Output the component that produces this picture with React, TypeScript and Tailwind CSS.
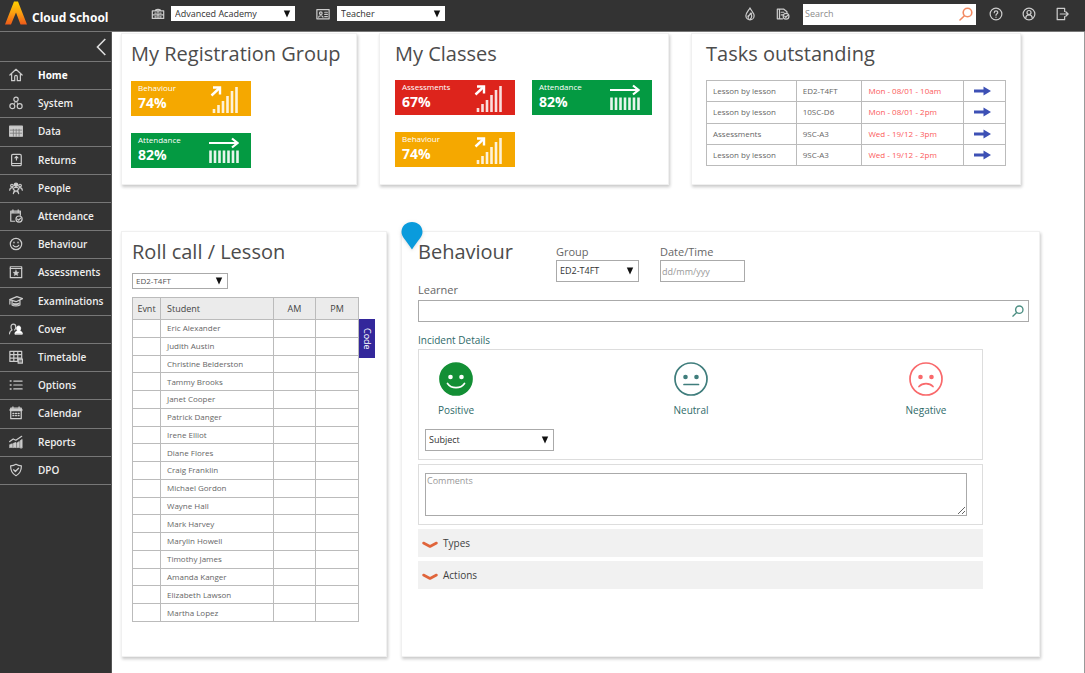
import type { ReactNode } from "react";

function Icon({ children, className = "size-3.5", view = "0 0 16 16" }: { children: ReactNode; className?: string; view?: string }) {
  return (
    <svg
      viewBox={view}
      className={`shrink-0 ${className}`}
      fill="none"
      stroke="currentColor"
      strokeWidth="1.4"
      strokeLinecap="round"
      strokeLinejoin="round"
      aria-hidden="true"
    >
      {children}
    </svg>
  );
}

const navItems: { label: string; icon: ReactNode }[] = [
  { label: "Home", icon: <path d="M1 8 8 1.5 15 8M3 7v7.5h3.5V10a1.5 1.5 0 0 1 3 0v4.500H13V7" /> },
  {
    label: "System",
    icon: (
      <>
        <circle cx="8" cy="3.800" r="2.500" />
        <circle cx="3.800" cy="11.600" r="2.800" />
        <circle cx="12.200" cy="11.600" r="2.800" />
        <path d="M7 7 6 9M9 7l1 2" strokeWidth="1" />
      </>
    ),
  },
  {
    label: "Data",
    icon: (
      <>
        <path d="M.8 2.500h14.400v11.500H.8z" fill="currentColor" />
        <path d="M1.500 7h13M1.500 10.500h13M5 6v8M8.200 6v8M11.500 6v8" stroke="#777" strokeWidth=".9" />
      </>
    ),
  },
  {
    label: "Returns",
    icon: (
      <>
        <rect x="3" y="1.500" width="11" height="13" rx="1.500" />
        <path d="M3.500 12h10M8.500 4v4M6.800 5.600 8.500 4l1.700 1.600" />
      </>
    ),
  },
  {
    label: "People",
    icon: (
      <>
        <circle cx="8" cy="4.200" r="1.900" fill="currentColor" />
        <circle cx="3.400" cy="5.200" r="1.500" />
        <circle cx="12.600" cy="5.200" r="1.500" />
        <path d="M.8 10.500c.2-2.400 1.500-3 3.200-3M15.200 10.500c-.2-2.400-1.500-3-3.200-3M5 14.500l1.200-4L4.600 9c.6-1.400 2-1.800 3.400-1.800S10.800 7.600 11.400 9l-1.600 1.500 1.200 4M6.500 12.500 8 11l1.500 1.500" />
      </>
    ),
  },
  {
    label: "Attendance",
    icon: (
      <>
        <path d="M6.500 14H2V2.500h11V7M2 4.500h11M4.500 1v2.500M10.500 1v2.500" />
        <circle cx="11.500" cy="11.500" r="3.500" />
        <path d="m9.800 11.500 1.300 1.300 2.200-2.300" />
      </>
    ),
  },
  {
    label: "Behaviour",
    icon: (
      <>
        <circle cx="8" cy="8" r="6.500" />
        <path d="M4.800 9.500c1.300 2.400 5.100 2.400 6.400 0" />
        <path d="M5.700 6v.5M10.300 6v.5" strokeWidth="1.600" />
      </>
    ),
  },
  {
    label: "Assessments",
    icon: (
      <>
        <rect x="1.500" y="2" width="13" height="12.500" />
        <path d="M1.500 4h13" />
        <path d="m8 5.500 1.100 2.400 2.500.3-1.900 1.700.5 2.500L8 11.200l-2.200 1.200.5-2.500-1.900-1.700 2.500-.3z" fill="currentColor" strokeWidth=".3" />
      </>
    ),
  },
  {
    label: "Examinations",
    icon: (
      <>
        <path d="M.8 6.500 9 3l6.500 2.300L8 8.800zM3.500 8v4.500c2 1.500 6.500 1.500 9 0V7M1 7v4.500" />
        <path d="M5 11.200c2 .7 4 .6 6-.2" strokeWidth="2" />
      </>
    ),
  },
  {
    label: "Cover",
    icon: (
      <>
        <path d="M.5 13.500c.2-3 1.200-3.600 3-4.300C2.600 8 2.300 7 2.300 5.600 2.300 3.700 3.300 2.500 5 2.500s2.700 1.200 2.700 3.100c0 1.400-.4 2.400-1.200 3.500" />
        <path d="M6.800 13.500c.1-2 .9-2.600 3-3.400-.8-.9-1.100-1.700-1.100-2.900 0-1.600.8-2.600 2.300-2.600s2.300 1 2.300 2.600c0 1.200-.3 2-1.100 2.900 2.100.8 2.900 1.400 3 3.400z" fill="#fff" stroke="#fff" strokeWidth="1" />
      </>
    ),
  },
  {
    label: "Timetable",
    icon: (
      <>
        <path d="M1 1.500h13.500v11.500H1zM1 5.300h13.500M1 9.200h13.500M5.500 1.500v11.500M10 1.500v11.500" />
        <path d="M10.500 10.500h5v4.500h-5z" fill="#777" />
      </>
    ),
  },
  {
    label: "Options",
    icon: (
      <>
        <path d="M5.500 3.500h9.500M5.500 8h9.500M5.500 12.500h9.500" />
        <path d="M1.500 3.500h.8M1.500 8h.8M1.500 12.500h.8" strokeWidth="1.800" />
      </>
    ),
  },
  {
    label: "Calendar",
    icon: (
      <>
        <rect x="2" y="2.500" width="12" height="12" />
        <path d="M2 4.500h12" strokeWidth="3" />
        <path d="M4.500 1v2M11.500 1v2" />
        <path d="M4.500 8.500h7M4.500 11h7" strokeDasharray="1 2" strokeWidth="1.600" />
      </>
    ),
  },
  {
    label: "Reports",
    icon: (
      <>
        <path d="M.8 14.500V11l3-1v4.500M5 14.500V9.500l3-1v6M9.200 14.500V9l2.500-1.500v7M12.800 14.500v-8l2.200-1.500v9.500z" fill="currentColor" strokeWidth=".8" />
        <path d="m.8 7.500 4-3 3 1.500L14.500 1.500" />
      </>
    ),
  },
  {
    label: "DPO",
    icon: (
      <>
        <path d="M8 1.500c2 1.300 4 1.700 6.200 1.700 0 5-1.500 9-6.200 11.300C3.300 12.200 1.800 8.200 1.800 3.200 4 3.200 6 2.800 8 1.500z" />
        <path d="m5.300 7.800 2 2 3.600-3.800" strokeWidth="1.500" />
      </>
    ),
  },
];

const tasks = [
  ["Lesson by lesson", "ED2-T4FT", "Mon - 08/01 - 10am"],
  ["Lesson by lesson", "10SC-D6", "Mon - 08/01 - 2pm"],
  ["Assessments", "9SC-A3", "Wed - 19/12 - 3pm"],
  ["Lesson by lesson", "9SC-A3", "Wed - 19/12 - 2pm"],
];

const students = [
  "Eric Alexander",
  "Judith Austin",
  "Christine Belderston",
  "Tammy Brooks",
  "Janet Cooper",
  "Patrick Danger",
  "Irene Elliot",
  "Diane Flores",
  "Craig Franklin",
  "Michael Gordon",
  "Wayne Hall",
  "Mark Harvey",
  "Marylin Howell",
  "Timothy James",
  "Amanda Kanger",
  "Elizabeth Lawson",
  "Martha Lopez",
];

function Select({ id, label, value, className, textClass }: { id: string; label?: string; value: string; className: string; textClass: string }) {
  return (
    <div className={`relative flex ${className}`}>
      <select id={id} aria-label={label} className={`w-full appearance-none bg-transparent outline-none ${textClass}`}>
        <option>{value}</option>
      </select>
      <svg viewBox="0 0 8 8" className="pointer-events-none absolute top-1/2 right-1 size-2 -translate-y-1/2" aria-hidden="true">
        <path d="M.8.500h6.400L4 7.500z" fill="#111" />
      </svg>
    </div>
  );
}

function Magnifier({ className }: { className: string }) {
  return (
    <svg viewBox="0 0 14 14" className={className} fill="none" stroke="currentColor" strokeWidth="1.600" strokeLinecap="round" aria-hidden="true">
      <circle cx="8.500" cy="5.500" r="4.300" />
      <path d="M5.400 8.700 1 13" />
    </svg>
  );
}

function Heading({ children }: { children: ReactNode }) {
  return <h2 className="text-[20px] leading-7 whitespace-nowrap text-[#4c4c4c]">{children}</h2>;
}

function Tile({ label, value, color, trend }: { label: string; value: string; color: string; trend: "up" | "flat" }) {
  return (
    <a href="#" className={`flex h-[35px] w-[120px] items-center justify-between pr-3 pl-[7px] text-white ${color}`}>
      <span className="flex flex-col pb-1">
        <span className="text-[8px] leading-3">{label}</span>
        <span className="text-[14px] leading-[18px] font-bold">{value}</span>
      </span>
      {trend === "up" ? (
        <svg viewBox="0 0 30 28" className="h-7 w-[30px]" fill="none" stroke="#fff" aria-hidden="true">
          <path d="M2.500 10.500 10 3.500" strokeWidth="2.400" />
          <path d="M4 2.500h7v7" strokeWidth="2.400" />
          <path d="M5 28v-4M9.500 28v-8M14 28V16M18.500 28V11M23 28V6M27.500 28V2" strokeWidth="2.600" opacity=".85" />
        </svg>
      ) : (
        <svg viewBox="0 0 30 28" className="h-7 w-[30px]" fill="none" stroke="#fff" aria-hidden="true">
          <path d="M0 6h27" strokeWidth="2" />
          <path d="m23 1.500 5.500 4.500-5.500 4.500" strokeWidth="2.200" />
          <path d="M1.500 26V13.500M6 26V13.500M10.500 26V13.500M15 26V13.500M19.500 26V13.500M24 26V13.500M28.500 26V13.500" strokeWidth="2.600" opacity=".9" />
        </svg>
      )}
    </a>
  );
}

function Face({ label, mood }: { label: string; mood: "positive" | "neutral" | "negative" }) {
  const stroke = mood === "positive" ? "#fff" : mood === "neutral" ? "#3f7d7c" : "#f9696b";
  const mouth = mood === "positive" ? "M8.500 21.500c4 5.600 13 5.600 17 0" : mood === "neutral" ? "M10 22.500h14.500" : "M10 24.500c3.500-3.800 10.500-3.800 14 0";
  return (
    <button type="button" className="flex w-12 flex-col items-center gap-1.5">
      <svg viewBox="0 0 34 34" className="size-[34px]" fill="none" stroke={stroke} strokeWidth="1.700" aria-hidden="true">
        <circle cx="17" cy="17" r="16" fill={mood === "positive" ? "#138f35" : "none"} stroke={mood === "positive" ? "#138f35" : stroke} />
        <circle cx="11.500" cy="15" r="2.300" fill={stroke} stroke="none" />
        <circle cx="22.500" cy="15" r="2.300" fill={stroke} stroke="none" />
        <path d={mouth} strokeLinecap="round" />
      </svg>
      <span className="text-[10px] leading-4 text-[#2f6a6a]">{label}</span>
    </button>
  );
}

function Accordion({ label }: { label: string }) {
  return (
    <button type="button" className="flex h-7 w-full items-center gap-[5px] bg-[#f1f1f1] pl-1 text-left text-[10px] text-[#3f3f3f]">
      <svg viewBox="0 0 16 8" className="mt-1 h-2 w-4" fill="none" stroke="#e0643a" strokeWidth="2.600" strokeLinecap="round" aria-hidden="true">
        <path d="M1.500 2 8 5.500 14.500 2" strokeLinejoin="round" />
      </svg>
      {label}
    </button>
  );
}

const card = "border border-[#f0f0f0] bg-white shadow-[1px_2px_3px_#c8c8c8]";

export default function App() {
  return (
    <div className="flex min-h-screen flex-col bg-white font-['Open_Sans',sans-serif] text-[#666]">
      <header className="flex h-8 items-center border-b border-[#777] bg-[#333] pr-4 text-[#ccc]">
        <a href="#" className="flex w-28 shrink-0 items-center gap-[5px] pl-[5px] text-[12px] font-bold text-white">
          <svg viewBox="0 0 22 24" className="-mt-1.5 h-6 w-[22px] shrink-0" aria-hidden="true">
            <defs>
              <linearGradient id="flame" x1="0" y1="0" x2="0" y2="1">
                <stop offset="0" stopColor="#ffd000" />
                <stop offset=".5" stopColor="#fba010" />
                <stop offset="1" stopColor="#ee5a1a" />
              </linearGradient>
            </defs>
            <path d="M9 .500h4L22 23.500h-6.500L11 11.500 6 23.500H0z" fill="url(#flame)" />
          </svg>
          <span className="pt-1 whitespace-nowrap">Cloud School</span>
        </a>
        <div className="ml-[39px] flex items-center gap-1.5 pb-1">
          <Icon>
            <path d="M1.500 4.500h13V13h-13zM5 4.500C5 2 11 2 11 4.500M8 4.500V13M1.500 9h13M4.500 11.200h1.500M10 11.200h1.500M4.500 7h1.500M10 7h1.500" />
          </Icon>
          <Select id="school" label="School" value="Advanced Academy" className="h-[15px] w-[124px] items-center bg-white" textClass="h-[15px] pl-1 text-[9px] leading-[15px] text-[#333]" />
        </div>
        <div className="ml-[21px] flex items-center gap-[7px] pb-1">
          <Icon>
            <path d="M1 3h14v10.500H1z" />
            <circle cx="5.500" cy="7" r="1.500" />
            <path d="M3 11.500c.3-2 4.700-2 5 0M10 6h3M10 8.500h3M10 11h3" />
          </Icon>
          <Select id="role" label="Role" value="Teacher" className="h-[15px] w-[108px] items-center bg-white" textClass="h-[15px] pl-1 text-[9px] leading-[15px] text-[#333]" />
        </div>
        <div className="ml-auto flex items-center gap-[13px] pb-[3px]">
          <div className="flex items-center gap-[19px]">
            <button type="button" aria-label="Activity">
              <Icon>
                <path d="M8 1C7 3.500 3.300 6.500 3.300 10a4.700 4.700 0 0 0 9.400 0C12.700 6.500 9.200 4.200 8 1zM6 13.500C4.800 11 8 9.500 8.500 7c2 2 2 5-.5 7M5.500 10.500 10 7" />
              </Icon>
            </button>
            <button type="button" aria-label="Records">
              <Icon>
                <path d="M7.500 13.500H1.500v-11h7.500l3.500 3V7M4 2.500v11M6 6h3M6 9h2" />
                <circle cx="11.500" cy="10.500" r="3.300" />
                <path d="m10 10.500 1.200 1.200 2-2.200" />
              </Icon>
            </button>
          </div>
          <div className="flex h-[21px] w-[173px] items-center bg-white pr-[3px]">
            <input type="search" aria-label="Search" placeholder="Search" className="min-w-0 flex-1 appearance-none pl-0.5 text-[9px] text-[#333] outline-none placeholder:text-[#8d8d8d]" />
            <Magnifier className="size-3.5 text-[#f28a62]" />
          </div>
          <div className="flex items-center gap-[19px]">
            <button type="button" aria-label="Help">
              <Icon>
                <circle cx="8" cy="8" r="6.700" />
                <path d="M6 6.500c0-2.600 4-2.600 4-.2C10 7.800 8 7.700 8 9.500M8 11.600v.2" strokeWidth="1.400" />
              </Icon>
            </button>
            <button type="button" aria-label="Account">
              <Icon>
                <circle cx="8" cy="8" r="6.700" />
                <circle cx="8" cy="6.300" r="2.300" />
                <path d="M4.300 12.500c.3-4.500 7.100-4.500 7.400 0" />
              </Icon>
            </button>
            <button type="button" aria-label="Log out">
              <Icon>
                <path d="M11 5V1.500H2.500v13H11V11M6 8h8.500M12.300 5.500 15 8l-2.700 2.500" />
              </Icon>
            </button>
          </div>
        </div>
      </header>

      <div className="flex flex-1">
        <aside className="w-28 shrink-0 border-r border-[#555] bg-[#333] text-[#eee]">
          <div className="flex h-[29px] items-center justify-end pr-[5px]">
            <button type="button" aria-label="Collapse menu">
              <svg viewBox="0 0 10 18" className="h-[18px] w-2.5" fill="none" stroke="#ddd" strokeWidth="1.600" aria-hidden="true">
                <path d="M9.300 1 1.500 9l7.800 8" />
              </svg>
            </button>
          </div>
          <nav className="grid h-[424px] auto-rows-fr border-b border-[#777]">
            {navItems.map((item, i) => (
              <a key={item.label} href="#" className="flex items-center gap-[15px] border-t border-[#777] pb-px pl-[9px] text-[10px] leading-4">
                <Icon className="size-3.5 text-[#ccc]">{item.icon}</Icon>
                <span className={i === 0 ? "font-bold text-white" : "font-semibold"}>{item.label}</span>
              </a>
            ))}
          </nav>
        </aside>

        <main className="min-w-0 flex-1 border-r border-[#999] pt-px pl-[9px]">
          <div className="mr-[63px] grid grid-cols-[236fr_290fr_330fr] gap-[22px]">
            <section className={`min-h-[152px] px-[9px] pt-1.5 ${card}`}>
              <Heading>My Registration Group</Heading>
              <div className="mt-[13px] flex flex-col gap-[17px]">
                <Tile label="Behaviour" value="74%" color="bg-[#f5a800]" trend="up" />
                <Tile label="Attendance" value="82%" color="bg-[#049a42]" trend="flat" />
              </div>
            </section>
            <section className={`min-h-[152px] px-[15px] pt-1.5 ${card}`}>
              <Heading>My Classes</Heading>
              <div className="mt-3 flex flex-wrap gap-[17px]">
                <Tile label="Assessments" value="67%" color="bg-[#dd241c]" trend="up" />
                <Tile label="Attendance" value="82%" color="bg-[#049a42]" trend="flat" />
                <Tile label="Behaviour" value="74%" color="bg-[#f5a800]" trend="up" />
              </div>
            </section>
            <section className={`min-h-[152px] px-[14px] pt-1.5 ${card}`}>
              <Heading>Tasks outstanding</Heading>
              <table className="mt-3 h-[86px] w-full table-fixed border-collapse text-left text-[8px] leading-3">
                <colgroup>
                  <col className="w-[30%]" />
                  <col className="w-[22%]" />
                  <col className="w-[34%]" />
                  <col className="w-[14%]" />
                </colgroup>
                <tbody>
                  {tasks.map(([name, group, due], i) => (
                    <tr key={i}>
                      <td className="border border-[#bbb] pl-1.5">{name}</td>
                      <td className="border border-[#bbb] pl-1.5">{group}</td>
                      <td className="border border-[#bbb] pl-1.5 text-[#fb5a5a]">{due}</td>
                      <td className="border border-[#bbb]">
                        <a href="#" aria-label={`Open ${name} ${group}`} className="flex justify-center pr-1">
                          <svg viewBox="0 0 17 10" className="h-2.5 w-[17px]" aria-hidden="true">
                            <path d="M0 3.500h9.500V.500L17 5 9.500 9.500V6.500H0z" fill="#3d50b5" />
                          </svg>
                        </a>
                      </td>
                    </tr>
                  ))}
                </tbody>
              </table>
            </section>
          </div>

          <div className="mt-[46px] mr-11 grid grid-cols-[266px_1fr] gap-[14px]">
            <section className={`min-h-[426px] pt-1.5 pl-[10px] ${card}`}>
              <Heading>Roll call / Lesson</Heading>
              <Select
                id="roll-group"
                label="Roll call group"
                value="ED2-T4FT"
                className="mt-[7px] h-4 w-[96px] items-center border border-[#aaa]"
                textClass="pl-[3px] text-[8px] leading-[14px] text-[#555]"
              />
              <div className="mt-2 flex items-start">
                <table className="h-[325px] w-[226px] table-fixed border-collapse text-left text-[8px] leading-3">
                  <colgroup>
                    <col className="w-7" />
                    <col className="w-[113px]" />
                    <col className="w-[42px]" />
                    <col className="w-[43px]" />
                  </colgroup>
                  <thead className="bg-[#ebebeb] text-[9px] text-[#444]">
                    <tr className="h-[22px]">
                      <th className="border border-[#bbb] text-center font-normal">Evnt</th>
                      <th className="border border-[#bbb] pl-1.5 font-normal">Student</th>
                      <th className="border border-[#bbb] text-center font-normal">AM</th>
                      <th className="border border-[#bbb] text-center font-normal">PM</th>
                    </tr>
                  </thead>
                  <tbody>
                    {students.map((name) => (
                      <tr key={name}>
                        <td className="border border-[#bbb]" />
                        <td className="border border-[#bbb] pl-1.5">{name}</td>
                        <td className="border border-[#bbb]" />
                        <td className="border border-[#bbb]" />
                      </tr>
                    ))}
                  </tbody>
                </table>
                <button type="button" className="mt-[22px] h-[39px] w-4 bg-[#33279b] text-center text-[9px] leading-4 text-white [writing-mode:vertical-rl]">
                  Code
                </button>
              </div>
            </section>

            <section className={`relative min-h-[426px] px-4 pt-1.5 ${card}`}>
              <svg viewBox="0 0 22 28" className="absolute -top-2.5 -left-px h-7 w-[22px] drop-shadow" aria-hidden="true">
                <path d="M11 0c6 0 10.500 4.300 10.500 10C21.500 15 17 18 11 27.500 5 18 .500 15 .500 10 .500 4.300 5 0 11 0z" fill="#0a9bdc" />
              </svg>
              <div className="flex items-start">
                <div className="w-[138px]">
                  <Heading>Behaviour</Heading>
                </div>
                <div className="mr-[21px] flex flex-col pt-1.5">
                  <label htmlFor="group" className="text-[11px] leading-4">Group</label>
                  <Select id="group" value="ED2-T4FT" className="h-[22px] w-[83px] items-center border border-[#aaa]" textClass="pl-[3px] text-[9px] leading-5 text-[#333]" />
                </div>
                <div className="flex flex-col pt-1.5">
                  <label htmlFor="date" className="text-[11px] leading-4">Date/Time</label>
                  <input id="date" type="text" placeholder="dd/mm/yyy" className="h-[22px] w-[85px] border border-[#aaa] pl-px text-[9px] outline-none placeholder:text-[#999]" />
                </div>
              </div>
              <label htmlFor="learner" className="block text-[11px] leading-4">Learner</label>
              <div className="mt-0.5 -mr-1.5 flex h-[22px] items-center border border-[#aaa] pr-1">
                <input id="learner" type="text" className="h-full min-w-0 flex-1 px-1 text-[10px] outline-none" />
                <Magnifier className="size-3 text-[#4d8f83]" />
              </div>
              <h3 className="mt-2.5 text-[10px] leading-4 text-[#2f6a6a]">Incident Details</h3>
              <div className="mt-px mr-10 flex flex-col gap-1">
                <div className="h-[111px] border border-[#ddd] pt-3 pl-1.5">
                  <div className="flex justify-between pr-8 pl-[7px]">
                    <Face label="Positive" mood="positive" />
                    <Face label="Neutral" mood="neutral" />
                    <Face label="Negative" mood="negative" />
                  </div>
                  <Select id="subject" label="Subject" value="Subject" className="mt-[11px] h-[22px] w-[129px] items-center border border-[#aaa]" textClass="pl-[3px] text-[9px] leading-5 text-[#333]" />
                </div>
                <div className="flex h-[61px] border border-[#ddd] pt-2 pr-[15px] pl-1.5">
                  <textarea aria-label="Comments" placeholder="Comments" className="h-[43px] w-full resize-y border border-[#aaa] px-px text-[9px] outline-none placeholder:text-[#999]" />
                </div>
                <Accordion label="Types" />
                <Accordion label="Actions" />
              </div>
            </section>
          </div>
        </main>
      </div>
    </div>
  );
}
